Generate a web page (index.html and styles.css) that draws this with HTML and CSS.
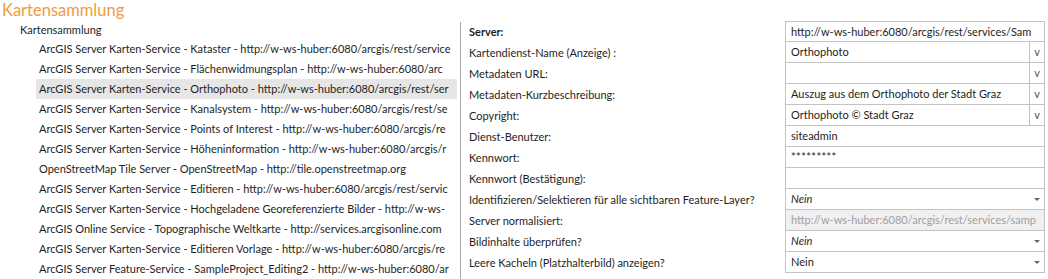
FILE: index.html
```html
<!DOCTYPE html>
<html lang="de">
<head>
    <meta charset="UTF-8">
    <title>Kartensammlung</title>
    <link rel="stylesheet" href="styles.css">
</head>
<body>

    <!-- Page title -->
    <h1 class="title">Kartensammlung</h1>

    <div class="main">
        <!-- Tree of map services -->
        <div class="tree">
            <div class="tree-root">Kartensammlung</div>
            <ul class="tree-items">
                <li>ArcGIS Server Karten-Service - Kataster - http://w-ws-huber:6080/arcgis/rest/service</li>
                <li>ArcGIS Server Karten-Service - Flächenwidmungsplan - http://w-ws-huber:6080/arc</li>
                <li class="selected">ArcGIS Server Karten-Service - Orthophoto - http://w-ws-huber:6080/arcgis/rest/ser</li>
                <li>ArcGIS Server Karten-Service - Kanalsystem - http://w-ws-huber:6080/arcgis/rest/se</li>
                <li>ArcGIS Server Karten-Service - Points of Interest - http://w-ws-huber:6080/arcgis/re</li>
                <li>ArcGIS Server Karten-Service - Höheninformation - http://w-ws-huber:6080/arcgis/r</li>
                <li>OpenStreetMap Tile Server - OpenStreetMap - http://tile.openstreetmap.org</li>
                <li>ArcGIS Server Karten-Service - Editieren - http://w-ws-huber:6080/arcgis/rest/servic</li>
                <li>ArcGIS Server Karten-Service - Hochgeladene Georeferenzierte Bilder - http://w-ws-</li>
                <li>ArcGIS Online Service - Topographische Weltkarte - http://services.arcgisonline.com</li>
                <li>ArcGIS Server Karten-Service - Editieren Vorlage - http://w-ws-huber:6080/arcgis/re</li>
                <li>ArcGIS Server Feature-Service - SampleProject_Editing2 - http://w-ws-huber:6080/ar</li>
            </ul>
        </div>

        <!-- Property grid -->
        <div class="props">
            <div class="prop-row first">
                <div class="label bold">Server:</div>
                <div class="field"><span class="value">http://w-ws-huber:6080/arcgis/rest/services/Sam</span></div>
            </div>
            <div class="prop-row">
                <div class="label">Kartendienst-Name (Anzeige) :</div>
                <div class="field"><span class="value">Orthophoto</span><span class="drop-btn">v</span></div>
            </div>
            <div class="prop-row">
                <div class="label">Metadaten URL:</div>
                <div class="field"><span class="value"></span><span class="drop-btn">v</span></div>
            </div>
            <div class="prop-row">
                <div class="label">Metadaten-Kurzbeschreibung:</div>
                <div class="field"><span class="value">Auszug aus dem Orthophoto der Stadt Graz</span><span class="drop-btn">v</span></div>
            </div>
            <div class="prop-row">
                <div class="label">Copyright:</div>
                <div class="field"><span class="value">Orthophoto © Stadt Graz</span><span class="drop-btn">v</span></div>
            </div>
            <div class="prop-row">
                <div class="label">Dienst-Benutzer:</div>
                <div class="field"><span class="value">siteadmin</span></div>
            </div>
            <div class="prop-row">
                <div class="label">Kennwort:</div>
                <div class="field"><span class="value password">*********</span></div>
            </div>
            <div class="prop-row">
                <div class="label">Kennwort (Bestätigung):</div>
                <div class="field"><span class="value"></span></div>
            </div>
            <div class="prop-row">
                <div class="label">Identifizieren/Selektieren für alle sichtbaren Feature-Layer?</div>
                <div class="field"><span class="value italic">Nein</span><span class="arrow"></span></div>
            </div>
            <div class="prop-row">
                <div class="label">Server normalisiert:</div>
                <div class="field disabled"><span class="value">http://w-ws-huber:6080/arcgis/rest/services/samp</span></div>
            </div>
            <div class="prop-row">
                <div class="label">Bildinhalte überprüfen?</div>
                <div class="field"><span class="value italic">Nein</span><span class="arrow"></span></div>
            </div>
            <div class="prop-row">
                <div class="label">Leere Kacheln (Platzhalterbild) anzeigen?</div>
                <div class="field"><span class="value">Nein</span><span class="arrow"></span></div>
            </div>
        </div>
    </div>

</body>
</html>
```

FILE: styles.css
```css
/* Reset */
* {
    margin: 0;
    padding: 0;
    box-sizing: border-box;
}

body {
    font-family: Lato, "Liberation Sans", sans-serif;
    font-size: 11px;
    color: #1e1e1e;
    background-color: #fff;
    width: 1048px;
    height: 279px;
    overflow: hidden;
}

/* Title */
.title {
    font-size: 16.5px;
    font-weight: 400;
    color: #f19c3c;
    height: 21px;
    line-height: 20px;
    padding-left: 2px;
}

.main {
    display: flex;
    height: 258px;
}

/* Tree on the left */
.tree {
    width: 461px;
    border-right: 1px solid #a9a9a9;
    margin-top: 1px;
    overflow: hidden;
}

.tree-root {
    height: 17px;
    line-height: 16px;
    padding-left: 20px;
}

.tree-items {
    list-style: none;
}

.tree-items li {
    height: 20px;
    line-height: 20px;
    margin-left: 36px;
    margin-right: 3px;
    padding-left: 3px;
    white-space: nowrap;
    overflow: hidden;
}

.tree-items li.selected {
    background-color: #e6e6e6;
}

/* Property grid on the right */
.props {
    flex-grow: 1;
    padding-left: 8px;
    padding-right: 3px;
}

.prop-row {
    display: flex;
    height: 21px;
}

.label {
    width: 316px;
    line-height: 21px;
    white-space: nowrap;
}

.label.bold {
    font-weight: 700;
}

.field {
    flex-grow: 1;
    display: flex;
    border: 1px solid #c3c3c3;
    border-top: none;
    height: 21px;
}

.first .field {
    border-top: 1px solid #c3c3c3;
}

.value {
    flex-grow: 1;
    padding-left: 5px;
    line-height: 19px;
    white-space: nowrap;
    overflow: hidden;
}

.value.italic {
    font-style: italic;
}

.value.password {
    letter-spacing: 0.4px;
}

.drop-btn {
    width: 15px;
    border-left: 1px solid #c3c3c3;
    text-align: center;
    line-height: 19px;
    color: #555;
}

.arrow {
    width: 15px;
    display: flex;
    align-items: center;
    justify-content: center;
}

.arrow::after {
    content: "";
    border-left: 3px solid transparent;
    border-right: 3px solid transparent;
    border-top: 3px solid #666;
}

.field.disabled {
    background-color: #f0f0f0;
}

.field.disabled .value {
    color: #a0a0a0;
}
```
